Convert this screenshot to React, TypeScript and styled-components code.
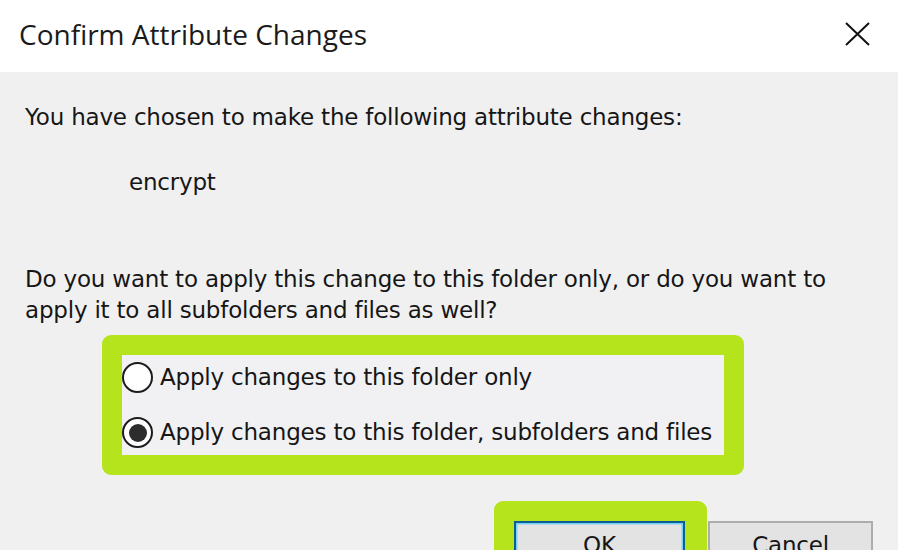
import React from 'react';
import styled, { createGlobalStyle } from 'styled-components';

const GlobalStyle = createGlobalStyle`
  html, body {
    margin: 0;
    padding: 0;
    background: #f0f0f1;
  }
  body {
    width: 898px;
    height: 550px;
    overflow: hidden;
  }
`;

const Dialog = styled.div`
  width: 898px;
  height: 550px;
  overflow: hidden;
  background: #f0f0f1;
  color: #161616;
`;

const TitleBar = styled.div`
  height: 72px;
  box-sizing: border-box;
  padding: 14px 28px 0 19px;
  background: #ffffff;
  display: flex;
  justify-content: space-between;
  align-items: flex-start;
`;

const Title = styled.div`
  font-family: 'Open Sans', 'Noto Sans', sans-serif;
  font-size: 28px;
  line-height: 40px;
  color: #1b1b1b;
`;

const CloseButton = styled.div`
  width: 25px;
  height: 24px;
  margin-top: 8px;
`;

const Body = styled.div`
  padding: 30px 0 0 25px;
  font-family: 'DejaVu Sans', Verdana, sans-serif;
  font-size: 23px;
  line-height: 31px;
  letter-spacing: -0.2px;
`;

const Line = styled.p<{ $indent?: number; $top?: number }>`
  margin: ${(p) => p.$top ?? 0}px 0 0 ${(p) => p.$indent ?? 0}px;
  white-space: nowrap;
`;

const Highlight = styled.div`
  border: 20px solid #b5e41c;
  border-radius: 9px;
  background: #f1f1f3;
`;

const OptionsBox = styled(Highlight)`
  width: 602px;
  margin: 9px 0 0 77px;
  padding: 7px 0 7px 0;
  display: flex;
  flex-direction: column;
  gap: 24px;
`;

const Option = styled.label`
  display: flex;
  align-items: center;
  gap: 7px;
  height: 31px;
  white-space: nowrap;
`;

const Radio = styled.span<{ $checked?: boolean }>`
  width: 31px;
  height: 31px;
  box-sizing: border-box;
  border-radius: 50%;
  border: 2.5px solid #1c1c1c;
  background: #ffffff;
  display: flex;
  align-items: center;
  justify-content: center;
  flex-shrink: 0;

  &::after {
    content: '';
    display: ${(p) => (p.$checked ? 'block' : 'none')};
    width: 18px;
    height: 18px;
    border-radius: 50%;
    background: #2d2d2d;
  }
`;

const ButtonRow = styled.div`
  display: flex;
  align-items: flex-start;
  margin: 26px 0 0 469px;
`;

const OkFrame = styled(Highlight)`
  border-radius: 9px 9px 0 0;
  border-right-width: 22px;
`;

const Button = styled.button<{ $primary?: boolean }>`
  box-sizing: border-box;
  height: 62px;
  padding: 0 0 14px;
  font-family: 'DejaVu Sans', Verdana, sans-serif;
  font-size: 23px;
  letter-spacing: -0.2px;
  color: #161616;
  background: #e3e3e3;
  border: 2px solid ${(p) => (p.$primary ? '#0b5f98' : '#adadad')};
  box-shadow: ${(p) => (p.$primary ? 'inset 0 0 0 1.5px #79d0f4' : 'none')};
  display: block;
`;

const OkButton = styled(Button)`
  width: 171px;
`;

const CancelButton = styled(Button)`
  width: 165px;
  margin-top: 20px;
  margin-left: 1px;
`;

export default function App() {
  return (
    <Dialog>
      <GlobalStyle />
      <TitleBar>
        <Title>Confirm Attribute Changes</Title>
        <CloseButton>
          <svg width="25" height="24" viewBox="0 0 25 24">
            <path d="M1 1 L24 23 M24 1 L1 23" stroke="#111" strokeWidth="2" fill="none" />
          </svg>
        </CloseButton>
      </TitleBar>
      <Body>
        <Line>You have chosen to make the following attribute changes:</Line>
        <Line $indent={104} $top={34}>encrypt</Line>
        <Line $top={66}>Do you want to apply this change to this folder only, or do you want to</Line>
        <Line>apply it to all subfolders and files as well?</Line>
        <OptionsBox>
          <Option>
            <Radio />
            Apply changes to this folder only
          </Option>
          <Option>
            <Radio $checked />
            Apply changes to this folder, subfolders and files
          </Option>
        </OptionsBox>
        <ButtonRow>
          <OkFrame>
            <OkButton $primary>OK</OkButton>
          </OkFrame>
          <CancelButton>Cancel</CancelButton>
        </ButtonRow>
      </Body>
    </Dialog>
  );
}
